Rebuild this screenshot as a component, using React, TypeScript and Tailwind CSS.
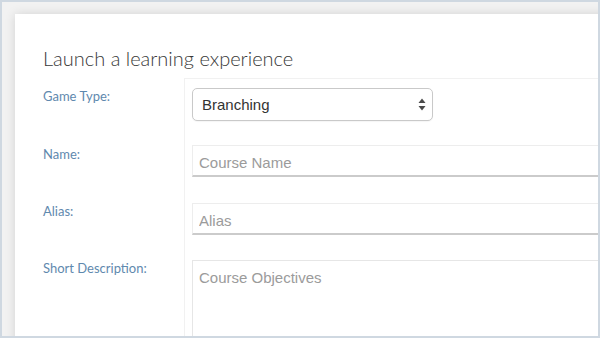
const labelCls = "block text-[13px] leading-4 text-[#5f89ae] font-['Lato',sans-serif]";
const inputCls =
  "block w-full h-8 bg-white border border-[#ededed] border-b-2 border-b-[#cbcbcb] pl-[6px] pt-[3px] text-[15px] text-[#333] outline-none placeholder:text-[#9b9b9b] font-['Liberation_Sans',Arial,sans-serif]";

function Row({ label, labelPad = "pt-0", cellPad, children }: { label: string; labelPad?: string; cellPad: string; children: React.ReactNode }) {
  return (
    <div className="flex">
      <div className={`w-[169px] shrink-0 pl-7 ${labelPad}`}>
        <span className={labelCls}>{label}</span>
      </div>
      <div className={`flex-1 border-l border-[#f1f1f1] pl-[7px] ${cellPad}`}>{children}</div>
    </div>
  );
}

function SelectArrows() {
  return (
    <svg width="8" height="13" viewBox="0 0 8 13" className="absolute right-[6px] top-[9px]">
      <path d="M4 0.5 L7.5 5 L0.5 5 Z" fill="#4a4a4a" />
      <path d="M4 12.5 L7.5 8 L0.5 8 Z" fill="#4a4a4a" />
    </svg>
  );
}

export default function App() {
  return (
    <div className="w-[600px] h-[338px] overflow-hidden border-2 border-[#cfd8e1] bg-[#f2f2f2]">
      <div className="ml-[13px] mt-3 w-[700px] h-[420px] bg-white shadow-[0_0_10px_rgba(0,0,0,0.13)]">
        <h1 className="pt-[30px] pl-7 text-[20px] leading-7 font-light text-[#383838] font-['Lato',sans-serif]">
          Launch a learning experience
        </h1>

        <div className="mt-[6px]">
          {/* Game type */}
          <div className="flex">
            <div className="w-[169px] shrink-0 pl-7 pt-[10px]">
              <span className={labelCls}>Game Type:</span>
            </div>
            <div className="flex-1 border-l border-t border-[#f1f1f1] pl-[7px] pt-[9px] pb-6">
              <div className="relative w-[241px] h-[33px] rounded-[5px] border border-[#c9c9c9] bg-white shadow-[0_1px_1px_rgba(0,0,0,0.04)]">
                <span className="absolute left-[9px] top-[7px] text-[15px] leading-[18px] text-[#333] font-['Liberation_Sans',Arial,sans-serif]">
                  Branching
                </span>
                <SelectArrows />
              </div>
            </div>
          </div>

          <Row label="Name:" labelPad="pt-px" cellPad="pb-[26px]">
            <input className={inputCls} placeholder="Course Name" />
          </Row>

          <Row label="Alias:" cellPad="pb-[25px]">
            <input className={inputCls} placeholder="Alias" />
          </Row>

          <Row label="Short Description:" cellPad="pb-4">
            <textarea
              className="block w-full h-[100px] resize-none bg-white border border-[#e6e6e6] pl-[6px] pt-[6px] text-[15px] text-[#333] outline-none placeholder:text-[#9b9b9b] font-['Liberation_Sans',Arial,sans-serif]"
              placeholder="Course Objectives"
            />
          </Row>
        </div>
      </div>
    </div>
  );
}
